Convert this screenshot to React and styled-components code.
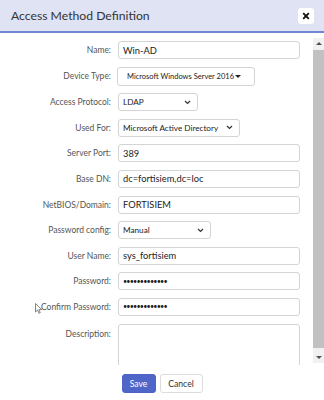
import React from "react";
import styled, { createGlobalStyle } from "styled-components";

const Global = createGlobalStyle`
  html, body { margin: 0; padding: 0; background: #fff; }
  body { font-family: Lato, "Open Sans", sans-serif; }
  * { box-sizing: border-box; }
`;

const Dialog = styled.div`
  width: 324px;
  height: 400px;
  display: flex;
  flex-direction: column;
  background: #fff;
  position: relative;
  overflow: hidden;
`;

const Header = styled.div`
  height: 33px;
  flex: none;
  background: #dfe3f4;
  border-bottom: 2px solid #7186d4;
  display: flex;
  align-items: center;
  justify-content: space-between;
  padding: 0 11px 0 11px;
`;

const Title = styled.div`
  font-size: 12.2px;
  color: #333;
`;

const Close = styled.div`
  width: 16px;
  height: 16px;
  background: #fff;
  border-radius: 3px;
  display: flex;
  align-items: center;
  justify-content: center;
  margin-right: -1px;
`;

const Body = styled.div`
  height: 332px;
  flex: none;
  display: flex;
`;

const Form = styled.div`
  flex: 1;
  overflow: hidden;
  padding: 8px 13px 0 0;
  display: grid;
  grid-template-columns: 111px 1fr;
  column-gap: 7px;
  row-gap: 7.6px;
  align-content: start;
`;

const Label = styled.label`
  font-size: 8.5px;
  color: #555;
  text-align: right;
  align-self: ${(p) => (p.$top ? "start" : "center")};
  padding-top: ${(p) => (p.$top ? "5px" : "0")};
  white-space: nowrap;
`;

const Input = styled.input`
  height: 18px;
  width: 100%;
  border: 1px solid #d4d4d4;
  border-radius: 3px;
  padding: 0 4px;
  font-family: inherit;
  font-size: ${(p) => (p.type === "password" ? "7.2px" : "9.3px")};
  color: #222;
  outline: none;
  background: #fff;
  letter-spacing: ${(p) => (p.type === "password" ? "-0.8px" : "0")};
`;

const Area = styled.textarea`
  height: 50px;
  width: 100%;
  border: 1px solid #d4d4d4;
  border-radius: 3px;
  resize: none;
  outline: none;
  font-family: inherit;
`;

const SelectBox = styled.div`
  height: ${(p) => (p.$tall ? "19px" : "18px")};
  width: ${(p) => p.$w}px;
  margin-left: ${(p) => (p.$tall ? "-1px" : "0")};
  border: 1px solid #d4d4d4;
  border-radius: 3px;
  display: flex;
  align-items: center;
  justify-content: space-between;
  padding: ${(p) => (p.$tall ? "0 13px 0 9px" : "0 6px 0 4px")};
  font-size: ${(p) => (p.$tall ? "7.5px" : "8.2px")};
  color: #222;
  background: #fff;
  white-space: nowrap;
`;

const Caret = styled.span`
  width: 0;
  height: 0;
  border-left: 3px solid transparent;
  border-right: 3px solid transparent;
  border-top: 3px solid #222;
`;

const Scrollbar = styled.div`
  width: 11px;
  flex: none;
  margin-top: 5px;
  height: 325px;
  background: #f1f1f1;
  display: flex;
  flex-direction: column;
  align-items: center;
`;

const Arrow = styled.div`
  height: 11px;
  flex: none;
  display: flex;
  align-items: center;
  justify-content: center;
  &::after {
    content: "";
    width: 0;
    height: 0;
    border-left: 3px solid transparent;
    border-right: 3px solid transparent;
    ${(p) => (p.$up ? "border-bottom: 3px solid #505050;" : "border-top: 3px solid #505050;")}
  }
`;

const Thumb = styled.div`
  flex: 1;
  width: 11px;
  background: #c1c1c1;
  margin: 1px 0 4px;
`;

const Footer = styled.div`
  flex: 1;
  display: flex;
  justify-content: center;
  align-items: flex-start;
  padding-top: 9px;
  gap: 4px;
`;

const Button = styled.button`
  height: 19px;
  padding: 0;
  width: ${(p) => p.$w}px;
  border-radius: 3px;
  font-family: inherit;
  font-size: 8.6px;
  border: 1px solid ${(p) => (p.$primary ? "#4d63c5" : "#dcdcdc")};
  background: ${(p) => (p.$primary ? "#4f66c8" : "#fff")};
  color: ${(p) => (p.$primary ? "#fff" : "#333")};
`;

const Cursor = styled.svg`
  position: absolute;
  left: 35px;
  top: 303px;
`;

const Chevron = () => (
  <svg width="7" height="5" viewBox="0 0 7 5">
    <path d="M1 1 L3.5 3.5 L6 1" fill="none" stroke="#333" strokeWidth="1.2" />
  </svg>
);

export default function App() {
  return (
    <>
      <Global />
      <Dialog>
        <Header>
          <Title>Access Method Definition</Title>
          <Close>
            <svg width="8" height="8" viewBox="0 0 8 8">
              <path d="M1.2 1.2 L6.8 6.8 M6.8 1.2 L1.2 6.8" stroke="#111" strokeWidth="1.9" />
            </svg>
          </Close>
        </Header>
        <Body>
          <Form>
            <Label>Name:</Label>
            <Input readOnly value="Win-AD" />
            <Label>Device Type:</Label>
            <SelectBox $w={138} $tall>
              <span>Microsoft Windows Server 2016</span>
              <Caret />
            </SelectBox>
            <Label>Access Protocol:</Label>
            <SelectBox $w={80}>
              <span>LDAP</span>
              <Chevron />
            </SelectBox>
            <Label>Used For:</Label>
            <SelectBox $w={122}>
              <span>Microsoft Active Directory</span>
              <Chevron />
            </SelectBox>
            <Label>Server Port:</Label>
            <Input readOnly value="389" />
            <Label>Base DN:</Label>
            <Input readOnly value="dc=fortisiem,dc=loc" />
            <Label>NetBIOS/Domain:</Label>
            <Input readOnly value="FORTISIEM" />
            <Label>Password config:</Label>
            <SelectBox $w={93}>
              <span>Manual</span>
              <Chevron />
            </SelectBox>
            <Label>User Name:</Label>
            <Input readOnly value="sys_fortisiem" />
            <Label>Password:</Label>
            <Input readOnly type="password" value="fortisiem1234" />
            <Label>Confirm Password:</Label>
            <Input readOnly type="password" value="fortisiem1234" />
            <Label $top>Description:</Label>
            <Area readOnly />
          </Form>
          <Scrollbar>
            <Arrow $up />
            <Thumb />
            <Arrow />
          </Scrollbar>
        </Body>
        <Footer>
          <Button $primary $w={34}>Save</Button>
          <Button $w={43}>Cancel</Button>
        </Footer>
        <Cursor width="8" height="11" viewBox="0 0 8 11">
          <path d="M0.5 0.5 L0.5 9 L2.6 7.1 L4 10.3 L5.3 9.7 L3.9 6.6 L6.8 6.6 Z" fill="#fff" stroke="#666" strokeWidth="0.8" />
        </Cursor>
      </Dialog>
    </>
  );
}
